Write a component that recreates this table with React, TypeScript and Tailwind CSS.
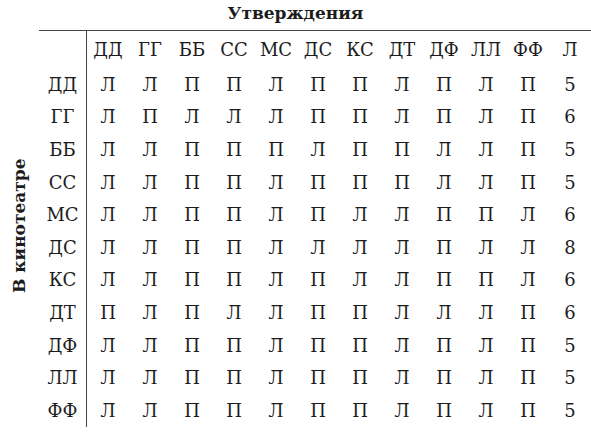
const cols = ["ДД", "ГГ", "ББ", "СС", "МС", "ДС", "КС", "ДТ", "ДФ", "ЛЛ", "ФФ", "Л"];

// row label, answers, count
const rows: [string, string, number][] = [
  ["ДД", "ЛЛППЛППЛПЛП", 5],
  ["ГГ", "ЛПЛЛЛППЛПЛП", 6],
  ["ББ", "ЛЛПППЛППЛЛП", 5],
  ["СС", "ЛЛППЛПППЛЛП", 5],
  ["МС", "ЛЛППЛПЛЛППЛ", 6],
  ["ДС", "ЛЛППЛЛЛЛПЛЛ", 8],
  ["КС", "ЛЛППЛПЛЛППЛ", 6],
  ["ДТ", "ПЛПЛЛППЛЛЛП", 6],
  ["ДФ", "ЛЛППЛППЛПЛП", 5],
  ["ЛЛ", "ЛЛППЛППЛПЛП", 5],
  ["ФФ", "ЛЛППЛППЛПЛП", 5],
];

export default function App() {
  return (
    <div
      className="w-[591px] h-[433px] bg-white text-[#1c1c1c] overflow-hidden"
      style={{ fontFamily: '"DejaVu Serif", serif' }}
    >
      <div className="h-[30px] flex items-center justify-center text-[17px] font-bold pb-[3px]">
        Утверждения
      </div>
      <div className="flex">
        <div className="w-[39px] flex items-center justify-center">
          <span className="-rotate-90 whitespace-nowrap text-[17px] font-bold mt-[-6px]">
            В кинотеатре
          </span>
        </div>
        <div className="flex-1 border-t border-[#444]">
          <div className="flex h-[37px] items-center text-[18px]">
            <div className="w-[48px] h-full border-r border-[#444]" />
            {cols.map((c, i) => (
              <div key={i} className="w-[42px] text-center">
                {c}
              </div>
            ))}
          </div>
          {rows.map(([label, vals, n]) => (
            <div key={label} className="flex h-[32.6px] items-center text-[18px]">
              <div className="w-[48px] h-full border-r border-[#444] flex items-center justify-center">
                {label}
              </div>
              {vals.split("").map((v, i) => (
                <div key={i} className="w-[42px] text-center">
                  {v}
                </div>
              ))}
              <div className="w-[42px] text-center">{n}</div>
            </div>
          ))}
        </div>
      </div>
    </div>
  );
}
